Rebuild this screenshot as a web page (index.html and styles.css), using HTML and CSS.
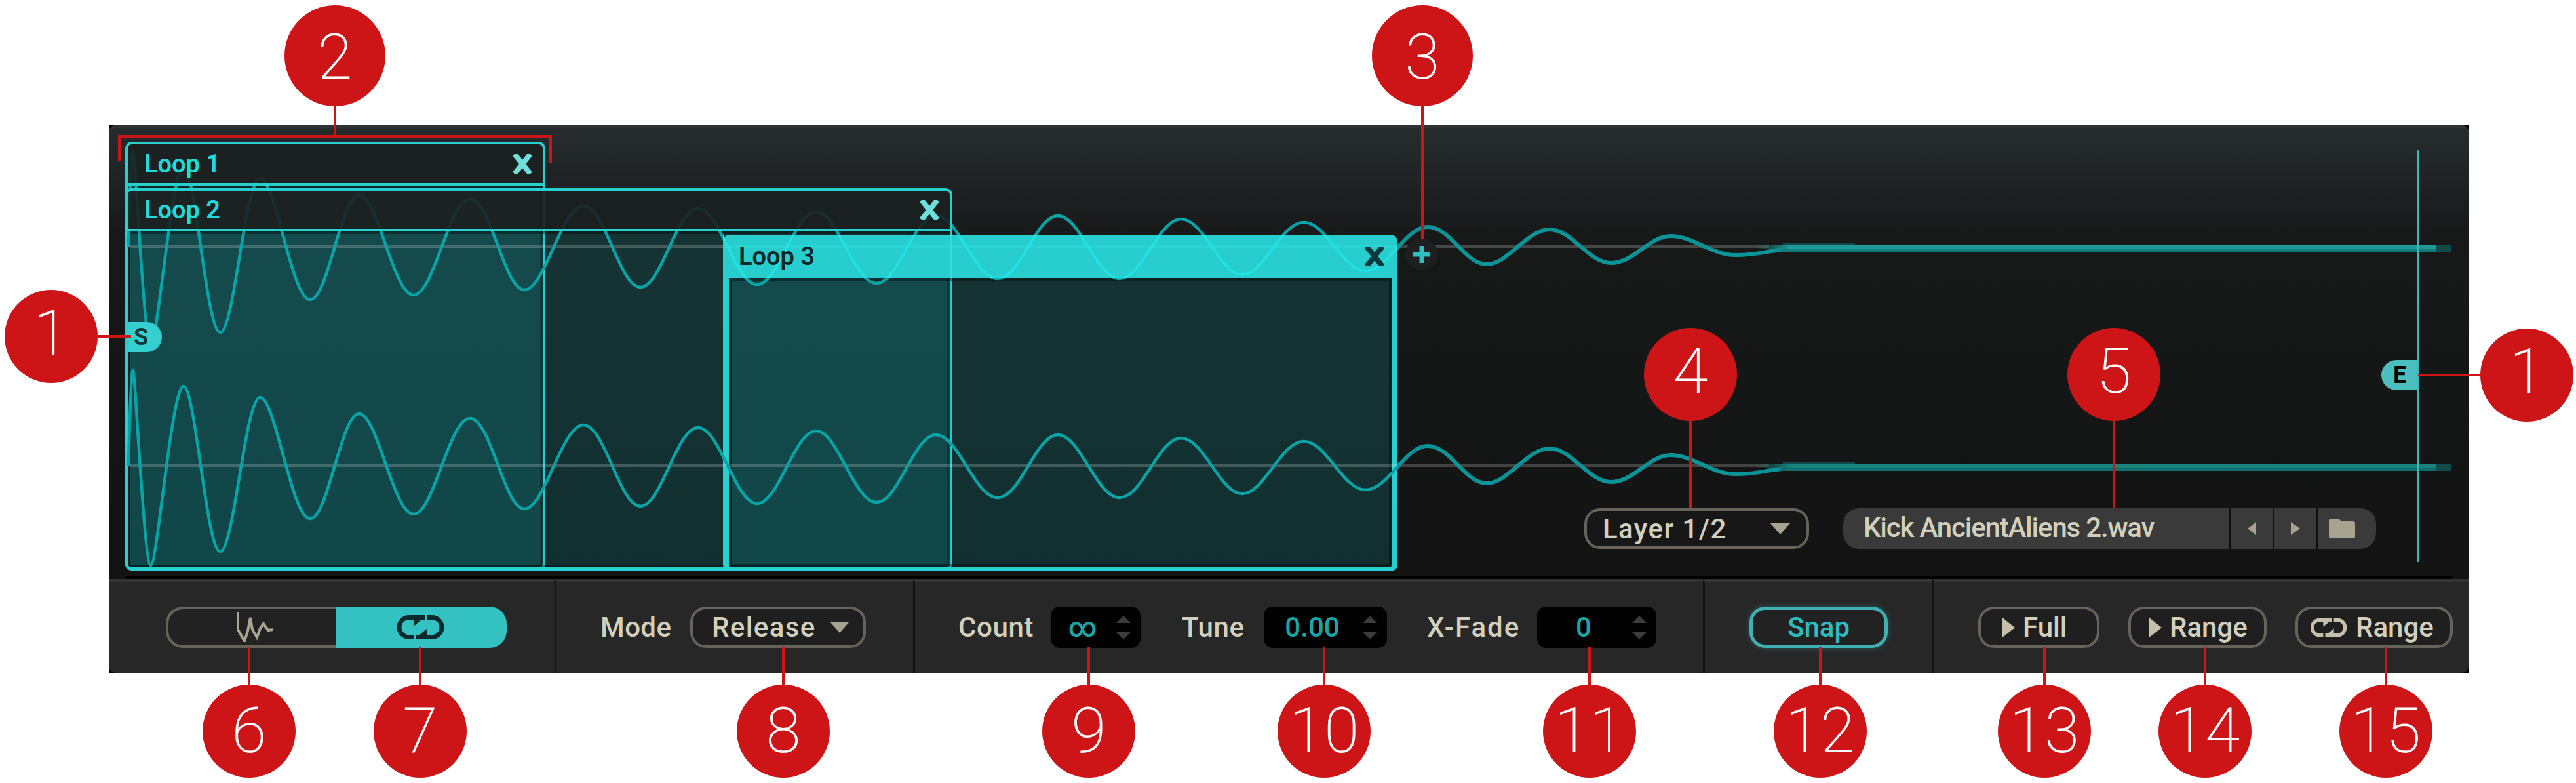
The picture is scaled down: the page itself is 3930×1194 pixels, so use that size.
FILE: index.html
```html
<!DOCTYPE html>
<html lang="en">
<head>
<meta charset="UTF-8" />
<title>Sample Editor Loop Page</title>
<link rel="stylesheet" href="styles.css">
</head>
<body>

<div class="panel">
  <!-- Waveform and loop regions -->
  <div class="display">
    <svg class="wave-layer" viewBox="166 191 3600 687" width="3600" height="687">
      <defs>
        <path id="wave" d="M196 376C198 300 200 230 203 230S220 528 230 528S262 255 280 255S315 507 336 507S374 272 397 272S445 457 473 457S520 297 548 297S600 450 631 450S685 304 717 304S769 442 800 442S857 314 890 314S945 438 977 438S1032 318 1065 318S1122 434 1155 434S1212 323 1245 323S1303 432 1337 432S1394 329 1428 329S1487 425 1522 425S1580 329 1614 329S1673 425 1708 425S1767 334 1802 334S1861 419 1895 419S1954 339 1989 339S2048 413 2083 413S2143 346 2178 346S2235 403 2268 403S2329 350 2364 350S2423 401 2458 401S2515 360 2549 360S2611 389 2648 389S2690 383 2720 381"/>
        <clipPath id="insideClip"><rect x="166" y="191" width="1966" height="687"/></clipPath>
        <clipPath id="outsideClip"><rect x="2132" y="191" width="700" height="687"/></clipPath>
        <linearGradient id="tailFade" gradientUnits="userSpaceOnUse" x1="2680" y1="0" x2="2730" y2="0">
          <stop offset="0" stop-color="#1f9a95" stop-opacity="0"/>
          <stop offset="1" stop-color="#1f9a95"/>
        </linearGradient>
        <linearGradient id="tailFadeLow" gradientUnits="userSpaceOnUse" x1="2680" y1="0" x2="2730" y2="0">
          <stop offset="0" stop-color="#18837e" stop-opacity="0"/>
          <stop offset="1" stop-color="#18837e"/>
        </linearGradient>
      </defs>
      <rect class="zero-line" x="199" y="374" width="2500" height="4"/>
      <rect class="zero-line" x="199" y="708" width="2500" height="4"/>
      <g clip-path="url(#insideClip)">
        <use href="#wave" class="wave-line"/>
        <use href="#wave" class="wave-line" y="334"/>
      </g>
      <g clip-path="url(#outsideClip)">
        <use href="#wave" class="wave-line wave-out"/>
        <use href="#wave" class="wave-line wave-out" y="334"/>
      </g>
      <rect class="tail-haze" x="2720" y="370" width="110" height="4"/>
      <rect class="tail-haze" x="2720" y="704" width="110" height="4"/>
      <rect x="2680" y="374" width="1036" height="5" fill="url(#tailFade)"/>
      <rect class="tail-under" x="2715" y="379" width="1001" height="5"/>
      <rect x="2680" y="708" width="1036" height="5" fill="url(#tailFadeLow)"/>
      <rect class="tail-under tail-low" x="2715" y="713" width="1001" height="5"/>
      <rect class="tail-end" x="3716" y="374" width="24" height="10"/>
      <rect class="tail-end" x="3716" y="708" width="24" height="10"/>
      <rect class="end-line" x="3688" y="228" width="3" height="629"/>
    </svg>

    <div class="loop loop-one">
      <div class="loop-head"><span>Loop 1</span><svg class="close" viewBox="0 0 30 30"><path d="M3 0L27 30M27 0L3 30"/></svg></div>
      <div class="loop-body"></div>
    </div>
    <div class="loop loop-two">
      <div class="loop-head"><span>Loop 2</span><svg class="close" viewBox="0 0 30 30"><path d="M3 0L27 30M27 0L3 30"/></svg></div>
      <div class="loop-body"></div>
    </div>
    <div class="loop loop-three">
      <div class="loop-head"></div>
      <div class="loop-body"></div>
      <div class="head-text"><span>Loop 3</span><svg class="close" viewBox="0 0 30 30"><path d="M3 0L27 30M27 0L3 30"/></svg></div>
    </div>

    <!-- wave seen through the selected header -->
    <svg class="wave-over" viewBox="166 191 3600 687" width="3600" height="687">
      <defs><clipPath id="headClip"><rect x="1103" y="358" width="1029" height="66"/></clipPath></defs>
      <g clip-path="url(#headClip)">
        <rect class="over-zero" x="1103" y="374" width="1029" height="4"/>
        <rect class="over-line" x="1449" y="358" width="4" height="66"/>
        <use href="#wave" class="wave-bright"/>
      </g>
    </svg>

    <div class="add-loop"><svg viewBox="0 0 26 26"><path d="M13 0V26M0 13H26"/></svg></div>
    <div class="marker marker-start">S</div>
    <div class="marker marker-end">E</div>

    <div class="sample-row">
      <div class="pill layer-menu"><span>Layer 1/2</span><i class="tri-down"></i></div>
      <div class="file-box">
        <div class="file-name">Kick AncientAliens 2.wav</div>
        <div class="file-btn nav"><i class="tri-left"></i></div>
        <div class="file-btn nav"><i class="tri-right"></i></div>
        <div class="file-btn folder">
          <svg viewBox="0 0 40 30"><path d="M0 3Q0 0 3 0H15L19 4H37Q40 4 40 7V27Q40 30 37 30H3Q0 30 0 27Z"/></svg>
        </div>
      </div>
    </div>
  </div>

  <div class="divider"></div>

  <!-- Bottom controls -->
  <div class="bar">
    <section class="group group-view">
      <div class="toggle">
        <div class="toggle-part">
          <svg class="wave-icon" viewBox="0 0 58 45"><path d="M4 0V26L14 44L19 28L23 8L26 26L33 38L38 24L43 17L50 27L58 26"/></svg>
        </div>
        <div class="toggle-part on">
          <svg class="loop-icon" viewBox="0 0 71 37"><use href="#loopGlyph"/></svg>
        </div>
      </div>
    </section>

    <section class="group group-mode">
      <span class="label label-mode">Mode</span>
      <div class="pill mode-menu"><span>Release</span><i class="tri-down"></i></div>
    </section>

    <section class="group group-values">
      <span class="label label-count">Count</span>
      <div class="spin spin-count"><span class="value">∞</span><div class="arrows"><i class="tri-up"></i><i class="tri-down"></i></div></div>
      <span class="label label-tune">Tune</span>
      <div class="spin spin-tune"><span class="value">0.00</span><div class="arrows"><i class="tri-up"></i><i class="tri-down"></i></div></div>
      <span class="label label-fade">X-Fade</span>
      <div class="spin spin-fade"><span class="value">0</span><div class="arrows"><i class="tri-up"></i><i class="tri-down"></i></div></div>
    </section>

    <section class="group group-snap">
      <div class="pill snap">Snap</div>
    </section>

    <section class="group group-play">
      <div class="pill play play-full"><i class="tri-play"></i>Full</div>
      <div class="pill play play-range"><i class="tri-play"></i>Range</div>
      <div class="pill play play-loop">
        <svg class="loop-small" viewBox="0 0 71 37"><use href="#loopGlyph"/></svg>Range
      </div>
    </section>
  </div>
</div>

<!-- Numbered callouts -->
<svg class="callouts" viewBox="0 0 3930 1194" width="3930" height="1194">
  <defs>
    <g id="loopGlyph">
      <path class="loop-stroke" d="M42 3.5H18A15 15 0 0 0 18 33.5H25M29 33.5H53A15 15 0 0 0 53 3.5H46"/>
      <path class="loop-fill" d="M25 6H38L25 17ZM46 31H33L46 20Z"/>
    </g>
  </defs>
  <g class="leads">
    <path d="M149 513H200M3689 572H3784M511 162V208M182 245V208H840V248M2170 162V365M2579 642V775M3225 642V775"/>
    <path d="M380 987V1044M641 987V1044M1195 987V1044M1661 987V1044M2020 987V1044M2425 987V1044M2777 987V1044M3119 987V1044M3364 987V1044M3640 987V1044"/>
  </g>
  <g class="dots">
    <circle cx="78" cy="513" r="71"/><circle cx="3855" cy="572" r="71"/>
    <circle cx="511" cy="85" r="77"/><circle cx="2170" cy="85" r="77"/>
    <circle cx="2579" cy="571" r="71"/><circle cx="3225" cy="571" r="71"/>
    <circle cx="380" cy="1115" r="71"/><circle cx="641" cy="1115" r="71"/><circle cx="1195" cy="1115" r="71"/>
    <circle cx="1661" cy="1115" r="71"/><circle cx="2020" cy="1115" r="71"/><circle cx="2425" cy="1115" r="71"/>
    <circle cx="2777" cy="1115" r="71"/><circle cx="3119" cy="1115" r="71"/><circle cx="3364" cy="1115" r="71"/><circle cx="3640" cy="1115" r="71"/>
  </g>
  <g class="nums">
    <text x="78" y="541">1</text><text x="3855" y="600">1</text>
    <text x="511" y="120">2</text><text x="2170" y="120">3</text>
    <text x="2579" y="599">4</text><text x="3225" y="599">5</text>
    <text x="380" y="1147">6</text><text x="641" y="1147">7</text><text x="1195" y="1147">8</text>
    <text x="1661" y="1147">9</text><text x="2020" y="1147">10</text><text x="2425" y="1147">11</text>
    <text x="2777" y="1147">12</text><text x="3119" y="1147">13</text><text x="3364" y="1147">14</text><text x="3640" y="1147">15</text>
  </g>
</svg>

</body>
</html>
```

FILE: styles.css
```css
html, body {
  margin: 0;
  padding: 0;
  height: 1194px;
  background: #fff;
  font-family: Roboto, "Liberation Sans", sans-serif;
  overflow: hidden;
}
body {
  position: relative;
}
.panel {
  width: 3600px;
  height: 835px;
  margin: 191px 0 0 166px;
  display: flex;
  flex-direction: column;
  background: #000;
}

/* waveform area */
.display {
  position: relative;
  height: 687px;
  border-radius: 10px 10px 0 0;
  background: linear-gradient(#262b2d 0, #23282a 40px, #171818 175px, #151616 400px, #131313 100%);
  box-shadow: inset 0 4px 0 #2e3335;
}
.wave-layer, .wave-over {
  position: absolute;
  top: 0;
  left: 0;
}
.wave-layer { z-index: 2; }
.wave-over { z-index: 4; }
.zero-line { fill: rgba(255, 255, 255, 0.2); }
.wave-line {
  fill: none;
  stroke: #08a5a8;
  stroke-width: 4.5;
}
.wave-out {
  stroke: #0b9497;
  stroke-width: 6;
}
.wave-bright {
  fill: none;
  stroke: #25e2e2;
  stroke-width: 4.5;
}
.over-line { fill: #35dcdc; }
.over-zero { fill: #2bd4d4; }
.tail-haze { fill: #12494a; }
.tail-under { fill: #0e7c78; }
.tail-low { fill: #0e6f6b; }
.tail-end { fill: #124b49; }
.end-line { fill: #3fb6b8; }

.loop {
  position: absolute;
  display: flex;
  flex-direction: column;
  box-sizing: border-box;
}
.loop-one { left: 25px; top: 25px; width: 641px; height: 654px; }
.loop-two { left: 25px; top: 96px; width: 1262px; height: 583px; }
.loop-three { left: 937px; top: 167px; width: 1029px; height: 513px; }
.loop-head, .head-text {
  box-sizing: border-box;
  display: flex;
  justify-content: space-between;
  align-items: center;
  font-size: 38px;
  font-weight: 600;
}
.loop-head {
  position: relative;
  z-index: 3;
  border: 4px solid #28cfcf;
  border-radius: 10px 10px 0 0;
  background: rgba(27, 32, 32, 0.9);
  color: #1fdcdc;
  padding: 0 16px 0 25px;
}
.loop-one .loop-head { height: 67px; }
.loop-two .loop-head { height: 66px; }
.loop-three .loop-head {
  z-index: 1;
  height: 66px;
  border: 0;
  background: #28cece;
}
.head-text {
  position: absolute;
  z-index: 5;
  top: 0;
  left: 0;
  right: 0;
  height: 66px;
  color: #06282a;
  padding: 0 20px 0 24px;
}
.close {
  width: 30px;
  height: 30px;
  fill: none;
  stroke: #6fdfdc;
  stroke-width: 8;
}
.loop-three .close { stroke: #0a3a3c; }
.loop-body {
  position: relative;
  z-index: 1;
  flex: 1;
  box-sizing: border-box;
  border: 4px solid #28cfcf;
  border-top: 0;
  border-bottom-width: 5px;
  border-radius: 0 0 10px 10px;
  background: rgba(20, 190, 195, 0.17);
  box-shadow: inset 0 0 0 4px rgba(0, 0, 0, 0.38);
}
.loop-three .loop-body {
  border-width: 0 9px 7px;
}

.add-loop {
  position: absolute;
  z-index: 5;
  left: 1978px;
  top: 173px;
  width: 50px;
  height: 47px;
  border-radius: 24px;
  background: #1e1f20;
  display: flex;
  align-items: center;
  justify-content: center;
}
.add-loop svg {
  width: 26px;
  height: 26px;
  fill: none;
  stroke: #30bdbd;
  stroke-width: 7;
}
.marker {
  position: absolute;
  z-index: 5;
  height: 46px;
  line-height: 46px;
  font-size: 36px;
  font-weight: 700;
  box-sizing: border-box;
}
.marker-start {
  left: 29px;
  top: 300px;
  width: 52px;
  padding-left: 9px;
  background: #36cfcf;
  color: #0f3a3c;
  border-radius: 0 23px 23px 0;
}
.marker-end {
  left: 3467px;
  top: 358px;
  width: 55px;
  padding-left: 18px;
  background: #4bbfc0;
  color: #000;
  border-radius: 23px 0 0 23px;
}

.sample-row {
  position: absolute;
  z-index: 5;
  left: 2251px;
  top: 584px;
  display: flex;
  gap: 52px;
}
.file-box {
  width: 813px;
  height: 62px;
  display: flex;
  background: #3a3a3a;
  border-radius: 24px;
  overflow: hidden;
  color: #d2cfbc;
  font-size: 42px;
  font-weight: 500;
}
.file-name {
  width: 588px;
  box-sizing: border-box;
  padding-left: 31px;
  line-height: 60px;
  white-space: nowrap;
  letter-spacing: -1.2px;
}
.file-btn {
  border-left: 3px solid #0e0e0e;
  box-sizing: border-box;
  display: flex;
  align-items: center;
  justify-content: center;
}
.nav { width: 67px; }
.folder { flex: 1; padding-right: 16px; }
.folder svg { width: 40px; height: 30px; fill: #a8a390; }

.divider {
  height: 5px;
  border-left: 24px solid #131313;
  border-right: 25px solid #131313;
  background: #000;
}

/* bottom controls */
.bar {
  height: 143px;
  display: flex;
  background: #272727;
  border-radius: 0 0 10px 10px;
}
.group {
  display: flex;
  align-items: center;
  box-sizing: border-box;
  border-top: 4px solid #333;
  border-left: 3px solid #111;
  height: 143px;
}
.group-view { width: 680px; padding-left: 87px; border-left: 0; }
.group-mode { width: 547px; padding-left: 67px; }
.group-values { width: 1205px; padding-left: 66px; }
.group-snap { width: 350px; padding-left: 68px; }
.group-play { flex: 1; padding-left: 67px; gap: 44px; }

.label {
  color: #d2cfbc;
  font-size: 42px;
  font-weight: 500;
  white-space: nowrap;
}
.label-mode { width: 137px; letter-spacing: 0.4px; }
.label-count { width: 141px; letter-spacing: 0.6px; }
.label-tune { width: 125px; margin-left: 63px; letter-spacing: 0.6px; }
.label-fade { width: 168px; margin-left: 61px; letter-spacing: 2px; }

.pill {
  height: 63px;
  box-sizing: border-box;
  border: 4px solid #66635a;
  border-radius: 24px;
  background: #1f1f1f;
  color: #d2cfbc;
  font-size: 42px;
  font-weight: 500;
  display: flex;
  align-items: center;
}
.mode-menu {
  width: 268px;
  padding: 0 21px 0 29px;
  justify-content: space-between;
  letter-spacing: 1.4px;
}
.layer-menu {
  width: 343px;
  height: 62px;
  padding: 0 25px 0 24px;
  justify-content: space-between;
  background: #171717;
  letter-spacing: 1.4px;
}
.toggle {
  width: 520px;
  height: 63px;
  display: flex;
  box-sizing: border-box;
}
.toggle-part {
  width: 259px;
  box-sizing: border-box;
  border: 4px solid #66635a;
  border-right: 0;
  border-radius: 26px 0 0 26px;
  background: #222;
  display: flex;
  align-items: center;
  justify-content: center;
}
.toggle-part.on {
  width: 261px;
  border: 0;
  border-radius: 0 26px 26px 0;
  background: #33c1c1;
}
.wave-icon {
  width: 58px;
  height: 45px;
  margin-left: 6px;
  fill: none;
  stroke: #a8a593;
  stroke-width: 4;
}
.loop-icon {
  width: 71px;
  height: 37px;
  color: #0a2a2d;
  margin-right: 2px;
}
.loop-small {
  width: 55px;
  height: 30px;
  color: #c4c0aa;
  margin-right: 14px;
}
.loop-stroke {
  fill: none;
  stroke: currentColor;
  stroke-width: 7;
}
.loop-fill { fill: currentColor; }

.spin {
  height: 63px;
  box-sizing: border-box;
  background: #010101;
  border-radius: 14px;
  display: flex;
  align-items: center;
  padding: 0 15px 0 12px;
}
.spin-count { width: 137px; }
.spin-tune { width: 188px; }
.spin-fade { width: 182px; }
.value {
  flex: 1;
  text-align: center;
  color: #1aa6a8;
  font-size: 42px;
  font-weight: 500;
}
.arrows {
  display: flex;
  flex-direction: column;
  gap: 14px;
  margin-left: 15px;
}
.arrows .tri-up { border-bottom-color: #3c3c3c; }
.arrows .tri-down { border-top-color: #3c3c3c; border-width: 11px 11px 0; }

.snap {
  width: 211px;
  justify-content: center;
  border: 5px solid #3fb0b4;
  background: #222;
  color: #2fbcc0;
  box-shadow: 0 0 10px rgba(60, 180, 185, 0.35);
}
.play { padding-left: 33px; background: #1f1f1f; }
.play-full { width: 185px; }
.play-range { width: 211px; padding-left: 28px; }
.play-loop { width: 240px; padding-left: 19px; }

.tri-down, .tri-up, .tri-left, .tri-right, .tri-play {
  display: block;
  width: 0;
  height: 0;
  border-style: solid;
  border-color: transparent;
}
.tri-down { border-width: 17px 15px 0; border-top-color: #a8a390; }
.tri-up { border-width: 0 11px 11px; }
.tri-left { border-width: 10px 13px 10px 0; border-right-color: #a8a390; }
.tri-right { border-width: 10px 0 10px 14px; border-left-color: #a8a390; }
.tri-play {
  border-width: 15px 0 15px 19px;
  border-left-color: #c4c0aa;
  margin-right: 12px;
}

/* callouts over everything */
.callouts {
  position: absolute;
  top: 0;
  left: 0;
  z-index: 10;
  pointer-events: none;
}
.leads path {
  fill: none;
  stroke: #cd1417;
  stroke-width: 4;
}
.dots circle { fill: #cd1417; }
.nums text {
  fill: #fff;
  font-family: Roboto, "Liberation Sans", sans-serif;
  font-size: 97px;
  font-weight: 200;
  text-anchor: middle;
}
```
